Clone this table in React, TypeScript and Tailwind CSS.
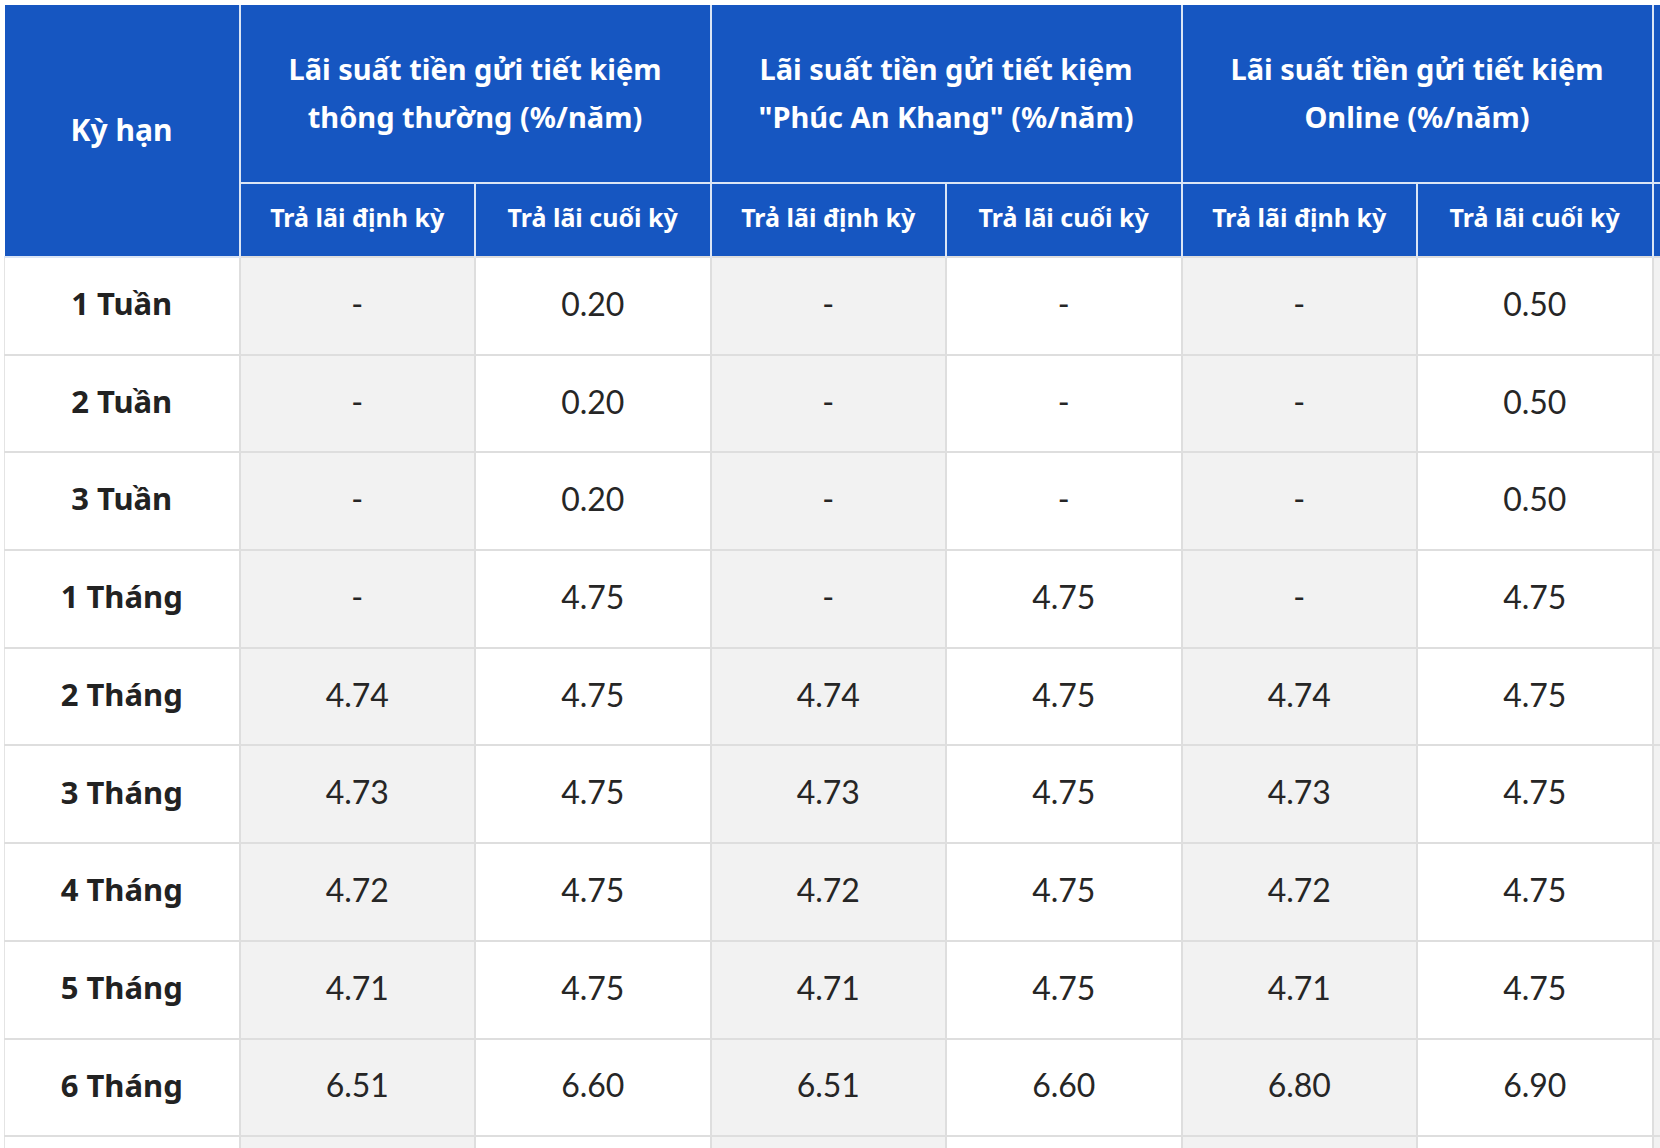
import React from "react";

const groups = [
  ["Lãi suất tiền gửi tiết kiệm", "thông thường (%/năm)"],
  ["Lãi suất tiền gửi tiết kiệm", "\"Phúc An Khang\" (%/năm)"],
  ["Lãi suất tiền gửi tiết kiệm", "Online (%/năm)"],
  ["Lãi suất tiền gửi tiết kiệm", "Online (%/năm)"],
];

const rows: [string, string[]][] = [
  ["1 Tuần", ["-", "0.20", "-", "-", "-", "0.50", "-", "0.50"]],
  ["2 Tuần", ["-", "0.20", "-", "-", "-", "0.50", "-", "0.50"]],
  ["3 Tuần", ["-", "0.20", "-", "-", "-", "0.50", "-", "0.50"]],
  ["1 Tháng", ["-", "4.75", "-", "4.75", "-", "4.75", "-", "4.75"]],
  ["2 Tháng", ["4.74", "4.75", "4.74", "4.75", "4.74", "4.75", "4.74", "4.75"]],
  ["3 Tháng", ["4.73", "4.75", "4.73", "4.75", "4.73", "4.75", "4.73", "4.75"]],
  ["4 Tháng", ["4.72", "4.75", "4.72", "4.75", "4.72", "4.75", "4.72", "4.75"]],
  ["5 Tháng", ["4.71", "4.75", "4.71", "4.75", "4.71", "4.75", "4.71", "4.75"]],
  ["6 Tháng", ["6.51", "6.60", "6.51", "6.60", "6.80", "6.90", "6.80", "6.90"]],
  ["7 Tháng", ["6.49", "6.60", "6.49", "6.60", "6.78", "6.90", "6.78", "6.90"]],
];

export default function App() {
  return (
    <div className="w-[1660px] h-[1148px] overflow-hidden bg-white pl-[4px] pt-[5px] font-['Lato',sans-serif]">
      <table className="table-fixed border-collapse w-[2118px]">
        <colgroup>
          <col className="w-[235px]" />
          {Array.from({ length: 8 }).map((_, i) => (
            <col key={i} className="w-[235.5px]" />
          ))}
        </colgroup>
        <thead className="font-['Noto_Sans',sans-serif]">
          <tr className="h-[178px]">
            <th
              rowSpan={2}
              className="bg-[#1656c1] text-white text-[30px] font-bold border-2 border-[#dbe5f5] border-t-0 border-l-0 align-middle pb-[2px]"
            >
              Kỳ hạn
            </th>
            {groups.map((g, i) => (
              <th
                key={i}
                colSpan={2}
                className="bg-[#1656c1] text-white text-[29px] leading-[48px] font-bold border-2 border-t-0 border-[#dbe5f5] align-middle pb-[2px] whitespace-nowrap"
              >
                {g[0]}
                <br />
                {g[1]}
              </th>
            ))}
          </tr>
          <tr className="h-[74px]">
            {groups.map((_, i) => (
              <React.Fragment key={i}>
                <th className="bg-[#1656c1] text-white text-[25px] font-bold border-2 border-[#dbe5f5] border-b-0 align-middle whitespace-nowrap pb-[4px]">
                  Trả lãi định kỳ
                </th>
                <th className="bg-[#1656c1] text-white text-[25px] font-bold border-2 border-[#dbe5f5] border-b-0 align-middle whitespace-nowrap pb-[4px]">
                  Trả lãi cuối kỳ
                </th>
              </React.Fragment>
            ))}
          </tr>
        </thead>
        <tbody>
          {rows.map(([label, vals]) => (
            <tr key={label} className="h-[97.7px]">
              <td className="text-center text-[31px] font-bold font-['Noto_Sans',sans-serif] text-[#222222] bg-white border-2 border-[#dedede] border-l-[1px] border-l-[#e4e4e4] pb-[5px]">
                {label}
              </td>
              {vals.map((v, j) => (
                <td
                  key={j}
                  className={
                    j % 2 === 0
                      ? "text-center text-[32px] text-[#262626] bg-[#f2f2f2] border-2 border-[#dedede] pb-[4px]"
                      : "text-center text-[32px] text-[#262626] bg-white border-2 border-[#dedede] pb-[4px]"
                  }
                >
                  {v}
                </td>
              ))}
            </tr>
          ))}
        </tbody>
      </table>
    </div>
  );
}
